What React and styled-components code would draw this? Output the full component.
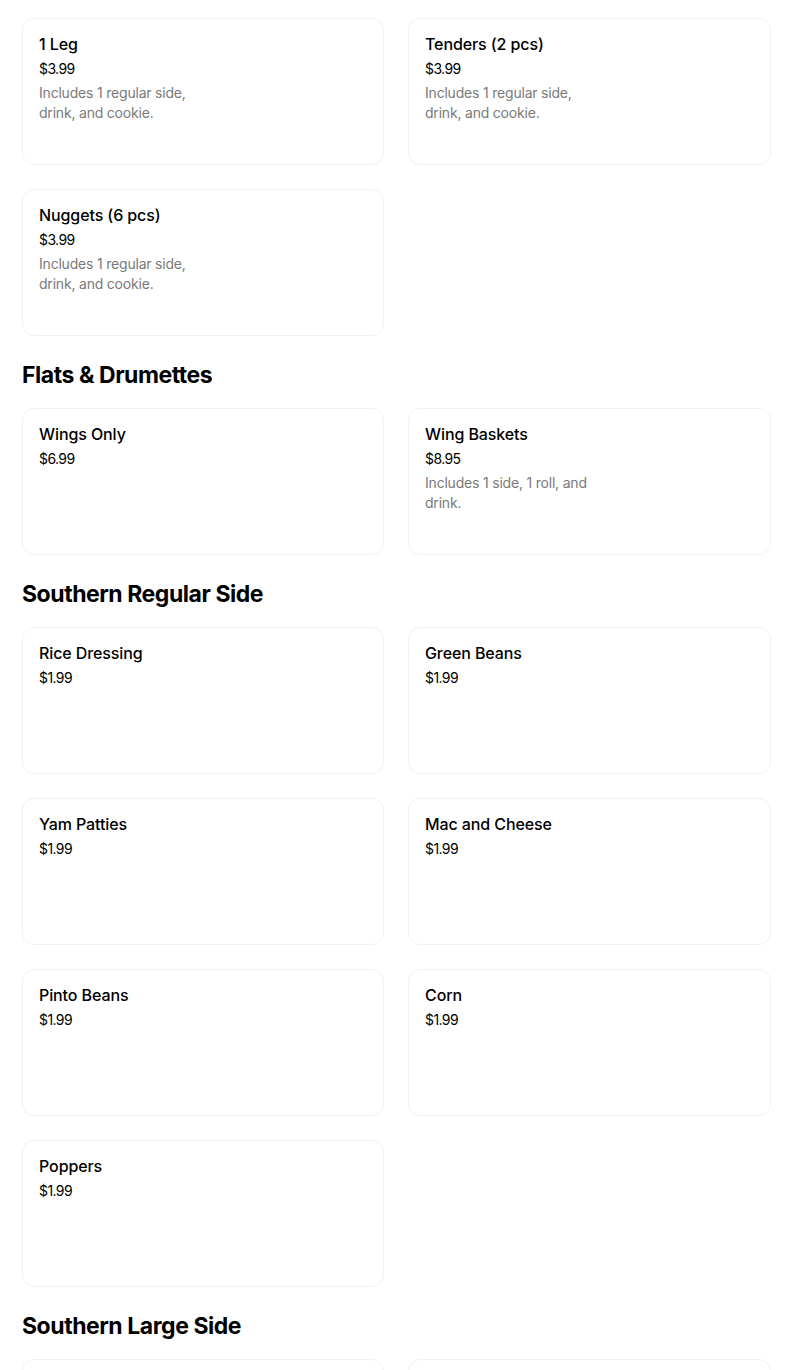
import styled, { createGlobalStyle } from "styled-components";

const sections = [
  {
    title: null,
    items: [
      { name: "1 Leg", price: "$3.99", desc: "Includes 1 regular side, drink, and cookie." },
      { name: "Tenders (2 pcs)", price: "$3.99", desc: "Includes 1 regular side, drink, and cookie." },
      { name: "Nuggets (6 pcs)", price: "$3.99", desc: "Includes 1 regular side, drink, and cookie." },
    ],
  },
  {
    title: "Flats & Drumettes",
    items: [
      { name: "Wings Only", price: "$6.99" },
      { name: "Wing Baskets", price: "$8.95", desc: "Includes 1 side, 1 roll, and drink." },
    ],
  },
  {
    title: "Southern Regular Side",
    items: [
      { name: "Rice Dressing", price: "$1.99" },
      { name: "Green Beans", price: "$1.99" },
      { name: "Yam Patties", price: "$1.99" },
      { name: "Mac and Cheese", price: "$1.99" },
      { name: "Pinto Beans", price: "$1.99" },
      { name: "Corn", price: "$1.99" },
      { name: "Poppers", price: "$1.99" },
    ],
  },
  {
    title: "Southern Large Side",
    items: [
      { name: "Rice Dressing", price: "$3.99" },
      { name: "Green Beans", price: "$3.99" },
    ],
  },
];

export default function App() {
  return (
    <>
      <GlobalStyle />
      <Page>
        {sections.map((section, i) => (
          <Section key={i}>
            {section.title && <Heading>{section.title}</Heading>}
            <Grid>
              {section.items.map((item) => (
                <Card key={item.name}>
                  <Name>{item.name}</Name>
                  <Price>{item.price}</Price>
                  {item.desc && <Desc>{item.desc}</Desc>}
                </Card>
              ))}
            </Grid>
          </Section>
        ))}
      </Page>
    </>
  );
}

const GlobalStyle = createGlobalStyle`
  body {
    margin: 0;
    background: #fff;
    font-family: Inter, "Noto Sans", sans-serif;
    color: #000;
  }
`;

const Page = styled.main`
  width: 749px;
  padding: 18px 0 0 22px;
`;

const Section = styled.section``;

const Heading = styled.h2`
  margin: 23px 0 17px;
  font-size: 23px;
  line-height: 32px;
  font-weight: 700;
  letter-spacing: -0.45px;
`;

const Grid = styled.div`
  display: grid;
  grid-template-columns: 362px 363px;
  gap: 24px;
`;

const Card = styled.article`
  height: 147px;
  box-sizing: border-box;
  border: 1px solid #f1f1f1;
  border-radius: 12px;
  padding: 15px 16px;
`;

const Name = styled.div`
  font-size: 16px;
  line-height: 20px;
  font-weight: 500;
  letter-spacing: -0.1px;
`;

const Price = styled.div`
  margin-top: 5px;
  font-size: 14px;
  line-height: 20px;
  letter-spacing: -0.6px;
`;

const Desc = styled.div`
  margin-top: 4px;
  font-size: 14px;
  line-height: 20px;
  color: #7a7a7a;
  letter-spacing: -0.2px;
  max-width: 175px;
`;
